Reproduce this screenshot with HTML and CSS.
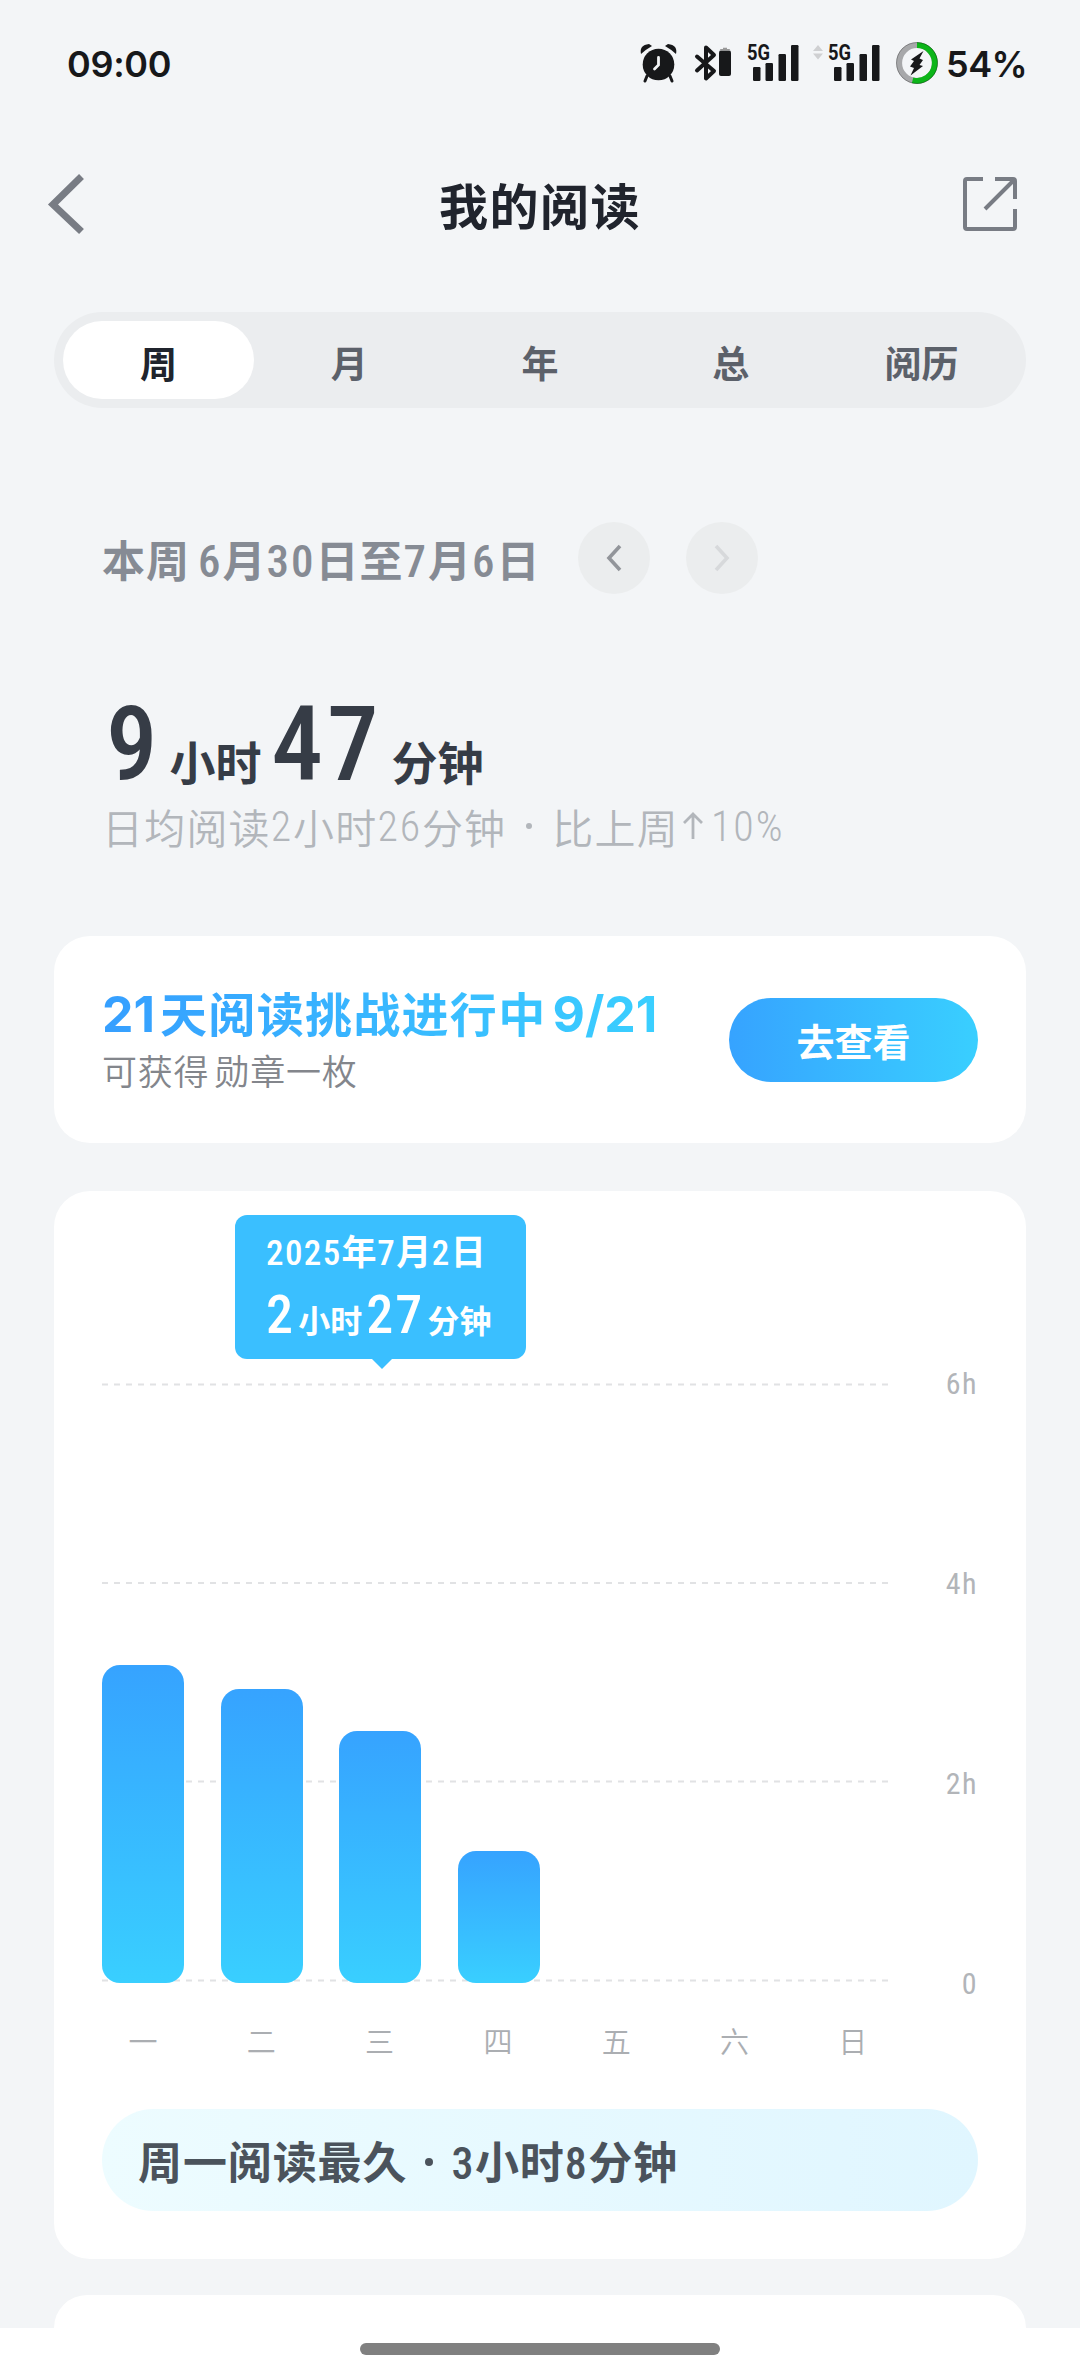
FILE: index.html
```html
<!DOCTYPE html>
<html lang="zh-CN">
<head>
<meta charset="utf-8">
<title>我的阅读</title>
<link rel="stylesheet" href="styles.css">
</head>
<body>
<header class="status">
  <span class="clock">09:00</span>
  <svg class="status-icons" width="310" height="50" viewBox="635 40 310 50">
    <g fill="#17181a">
      <circle cx="658.500" cy="65.500" r="15.800"/>
      <path d="M641 55Q639 46 649 45L652 47Q645 51 641 55ZM676 55Q678 46 668 45L665 47Q672 51 676 55Z"/>
      <path d="M647 77l-2 5M670 77l2 5" stroke="#17181a" stroke-width="3" stroke-linecap="round"/>
      <path d="M658.500 58.500v7.500l-4 4" stroke="#f3f5f7" stroke-width="2.800" stroke-linecap="round" fill="none"/>
      <path d="M697 57.500L714 72L706 79.500V48.500L714 56L697 71.500" fill="none" stroke="#17181a" stroke-width="4" stroke-linecap="round" stroke-linejoin="round"/>
      <rect x="719" y="51.500" width="12" height="25.500" rx="2"/>
      <path d="M719.500 51.500l1-1.500h2.500v-1.200h4v1.200h2.500l1 1.500z" fill="#999"/>
      <g id="bars">
        <rect x="753" y="68" width="7.500" height="14" rx="1.200"/>
        <rect x="765.500" y="64" width="7.500" height="18" rx="1.200"/>
        <rect x="778.500" y="55" width="7.500" height="27" rx="1.200"/>
        <rect x="791" y="46" width="7.500" height="36" rx="1.200"/>
      </g>
      <use href="#bars" x="81"/>
      <text class="net" x="747" y="60.500" textLength="23" lengthAdjust="spacingAndGlyphs">5G</text>
      <text class="net" x="828" y="60.500" textLength="23" lengthAdjust="spacingAndGlyphs">5G</text>
      <path d="M813 52l5-6 5 6zM813 54.500l5 6 5-6z" fill="#cfd0d2"/>
      <circle cx="917" cy="64" r="17.800" fill="none" stroke="#a7a8aa" stroke-width="5.800"/>
      <path d="M917 46.200A17.800 17.800 0 1 1 912.600 81.250" fill="none" stroke="#0cb519" stroke-width="5.800"/>
      <circle cx="917" cy="64" r="20.500" fill="none" stroke="#000" stroke-opacity=".3"/>
      <path d="M923.500 52L911 60.500L914 62L910 67.500L914 69L910.500 76.500L923 67L919.500 66L923 61L919.500 59.500Z"/>
    </g>
  </svg>
  <span class="percent">54%</span>
</header>

<nav class="titlebar">
  <svg width="40" height="64" viewBox="0 0 40 64"><path d="M35.500 4.500L7 32.500L35.500 59.500" fill="none" stroke="#787c84" stroke-width="7"/></svg>
  <h1>我的阅读</h1>
  <svg class="share" width="54" height="54" viewBox="0 0 54 54"><path d="M20 2H4Q2 2 2 4V50Q2 52 4 52H50Q52 52 52 50V32M32 2H50Q52 2 52 4V22M51 3L22 32" fill="none" stroke="#787c84" stroke-width="4"/></svg>
</nav>

<div class="tabs">
  <span class="tab active">周</span><span class="tab">月</span><span class="tab">年</span><span class="tab">总</span><span class="tab">阅历</span>
</div>

<div class="period">
  <span class="range">本周<b class="gap"></b><i>6</i>月<i>30</i>日至<i>7</i>月<i>6</i>日</span>
  <span class="round"><svg width="16" height="28" viewBox="0 0 16 28"><path d="M14 2L3 14L14 26" fill="none" stroke="#92959a" stroke-width="3.600"/></svg></span>
  <span class="round"><svg width="16" height="28" viewBox="0 0 16 28"><path d="M2 2L13 14L2 26" fill="none" stroke="#d7d9db" stroke-width="3.600"/></svg></span>
</div>

<div class="total"><i>9</i><span class="u1">小时</span><i>47</i><span class="u2">分钟</span></div>
<div class="average">日均阅读<i>2</i>小时<i>26</i>分钟<span class="dot"><b></b></span>比上周<svg width="24" height="34" viewBox="0 0 24 34"><path d="M12 30V5M3 14L12 5L21 14" fill="none" stroke="#b2b6bb" stroke-width="2.800"/></svg><i class="rise">10%</i></div>

<section class="card challenge">
  <div class="info">
    <div class="headline"><i>21</i>天阅读挑战进行中<i class="progress">9/21</i></div>
    <div class="reward">可获得<b class="gap"></b>勋章一枚</div>
  </div>
  <span class="button">去查看</span>
</section>

<section class="card chart-card">
  <div class="chart">
    <svg class="grid" width="786" height="600" viewBox="0 0 786 600"><path d="M0 1.500H786M0 200H786M0 398.500H786M0 597.500H786" stroke="#e1e2e4" stroke-width="2" stroke-dasharray="6 6"/></svg>
    <div class="bars">
      <div class="bar" style="height:318px"></div>
      <div class="bar" style="height:294px"></div>
      <div class="bar" style="height:252px"></div>
      <div class="bar" style="height:132px"></div>
    </div>
    <div class="scale"><span>6h</span><span>4h</span><span>2h</span><span>0</span></div>
    <div class="tooltip">
      <div class="tip-date"><i>2025</i>年<i>7</i>月<i>2</i>日</div>
      <div class="tip-time"><i>2</i><span>小时</span><i>27</i><span>分钟</span></div>
    </div>
  </div>
  <div class="days"><span>一</span><span>二</span><span>三</span><span>四</span><span>五</span><span>六</span><span>日</span></div>
  <div class="summary">周一阅读最久<span class="dot"><b></b></span><i>3</i>小时<i>8</i>分钟</div>
</section>

<section class="card next"></section>
<footer><span class="handle"></span></footer>
</body>
</html>
```

FILE: styles.css
```css
* { box-sizing: border-box; }
body {
  margin: 0;
  width: 1080px;
  height: 2376px;
  overflow: hidden;
  display: flex;
  flex-direction: column;
  background: #f3f5f7;
  font-family: "Noto Sans CJK SC", sans-serif;
  white-space: nowrap;
}
svg { display: block; flex: none; }
i { font-style: normal; font-family: Roboto, sans-serif; font-stretch: 75%; line-height: 0; }
.gap { display: inline-block; width: 8px; }

.status {
  height: 128px;
  flex: none;
  display: flex;
  align-items: center;
  padding-left: 67px;
  font: 600 36px/44px Inter, sans-serif;
  color: #17181a;
}
.clock { width: 568px; letter-spacing: -0.3px; }
.status-icons { width: 310px; }
.percent { letter-spacing: -0.5px; margin-left: 1px; }
.net { font: 700 22px Roboto, sans-serif; }

.titlebar {
  height: 152px;
  flex: none;
  display: grid;
  grid-template-columns: 1fr auto 1fr;
  align-items: center;
  padding: 0 63px 0 46px;
}
.share { justify-self: end; }
h1 { margin: 0 0 0 17px; font-size: 49px; line-height: 152px; letter-spacing: 1.5px; font-weight: 700; color: #20242d; }

.tabs {
  margin: 32px 54px 0;
  height: 96px;
  flex: none;
  padding: 9px;
  border-radius: 48px;
  background: #ebedef;
  display: grid;
  grid-template-columns: repeat(5, 1fr);
}
.tab { text-align: center; font-size: 37px; line-height: 82px; height: 78px; font-weight: 700; color: #5c616a; border-radius: 39px; }
.tab.active { background: #fff; color: #20242d; }

.period { margin: 114px 0 0 102px; height: 72px; flex: none; display: flex; align-items: center; gap: 36px; color: #868b94; }
.range { width: 440px; font-size: 43px; line-height: 72px; font-weight: 700; letter-spacing: 1px; }
.range i { font-weight: 500; font-size: 45px; letter-spacing: 2px; }
.round { width: 72px; height: 72px; border-radius: 50%; background: #ebedee; display: flex; align-items: center; justify-content: center; }

.total { margin: 118px 0 0 106px; height: 88px; flex: none; line-height: 96px; color: #363c46; font-weight: 700; font-size: 46px; }
.total i { font-size: 103px; font-weight: 500; letter-spacing: 4px; }
.u1 { margin: 0 10px 0 8px; }
.u2 { margin-left: 9px; }
.average { margin: 0 0 0 102px; height: 52px; flex: none; display: flex; align-items: center; font-size: 41px; line-height: 52px; font-weight: 350; letter-spacing: 1.2px; color: #b2b6bb; }
.average i { line-height: 52px; padding-top: 2px; letter-spacing: 1.8px; font-size: 42px; }
.average svg { margin: 0 6px 0 2px; }
.average .rise { letter-spacing: 2px; }

.card { margin: 0 54px; flex: none; border-radius: 36px; background: #fff; }
.challenge { margin-top: 84px; height: 207px; padding: 0 48px; display: flex; align-items: center; justify-content: space-between; }
.headline {
  width: max-content;
  margin-top: -2px;
  font-size: 47px;
  line-height: 60px;
  font-weight: 700;
  letter-spacing: 1.3px;
  background: linear-gradient(90deg, #369fff, #3acfff);
  -webkit-background-clip: text;
  background-clip: text;
  color: transparent;
}
.headline i { font-family: Inter, sans-serif; font-size: 50px; letter-spacing: 0; }
.headline i:first-child { margin-right: 5px; }
.progress { margin-left: 6px; }
.reward { margin-top: 2px; font-size: 35px; line-height: 52px; font-weight: 350; letter-spacing: 0.8px; color: #83868c; }
.reward .gap { width: 5px; }
.button { width: 249px; height: 84px; border-radius: 42px; background: linear-gradient(90deg, #36a3ff, #39cfff); color: #fff; font-size: 38px; line-height: 84px; font-weight: 700; text-align: center; }

.chart-card { margin-top: 48px; height: 1068px; padding: 0 48px; }
.chart { position: relative; height: 792px; padding-top: 192px; display: flex; justify-content: space-between; }
.bars { position: absolute; left: 0; bottom: 0; width: 786px; display: grid; grid-template-columns: repeat(4, 82px); column-gap: 36.5px; align-items: end; }
.bar { border-radius: 18px; background: linear-gradient(#36a3ff, #39cfff); }
.scale { height: 636px; margin-top: -17px; display: flex; flex-direction: column; justify-content: space-between; text-align: right; font: 400 30px/36px Roboto, sans-serif; font-stretch: 75%; letter-spacing: 1.5px; color: #b2b5b9; }
.tooltip { position: absolute; left: 133px; top: 24px; width: 291px; height: 144px; border-radius: 12px; background: #3abfff; color: #fff; padding: 11px 0 0 31px; font-weight: 700; }
.tooltip::after { content: ""; position: absolute; left: 137px; top: 144px; border: 10px solid transparent; border-top-color: #3abfff; border-bottom: 0; }
.tip-date { font-size: 35px; line-height: 48px; letter-spacing: 0.6px; }
.tip-date i { font-weight: 500; letter-spacing: 1.4px; }
.tip-time { margin-top: 10px; font-size: 32px; line-height: 70px; }
.tip-time i { font-size: 54px; font-weight: 500; letter-spacing: 1.8px; }
.tip-time span { margin: 0 4px 0 3.5px; }
.days { display: grid; grid-template-columns: repeat(7, 82px); column-gap: 36.3px; margin-top: 39px; text-align: center; font-size: 29px; line-height: 36px; font-weight: 350; color: #abaeb2; }
.summary { margin-top: 51px; height: 102px; border-radius: 51px; padding-left: 36px; background: linear-gradient(90deg, #edfcff, #e0f6ff); font-size: 44px; line-height: 103px; font-weight: 700; letter-spacing: 0.9px; color: #4b535c; }
.summary i { font-weight: 500; letter-spacing: 1.5px; }
.dot { display: inline-flex; align-items: center; justify-content: center; }
.dot b { border-radius: 50%; background: currentColor; }
.summary .dot { width: 44px; vertical-align: 13px; height: 8px; }
.summary .dot b { width: 8px; height: 8px; }
.average .dot { width: 46px; }
.average .dot b { width: 6px; height: 6px; }
.next { margin-top: 36px; height: 33px; border-radius: 36px 36px 0 0; }
footer { height: 48px; flex: none; background: #fff; display: flex; justify-content: center; padding-top: 15px; }
.handle { width: 360px; height: 12px; border-radius: 6px; background: #808080; }
```
